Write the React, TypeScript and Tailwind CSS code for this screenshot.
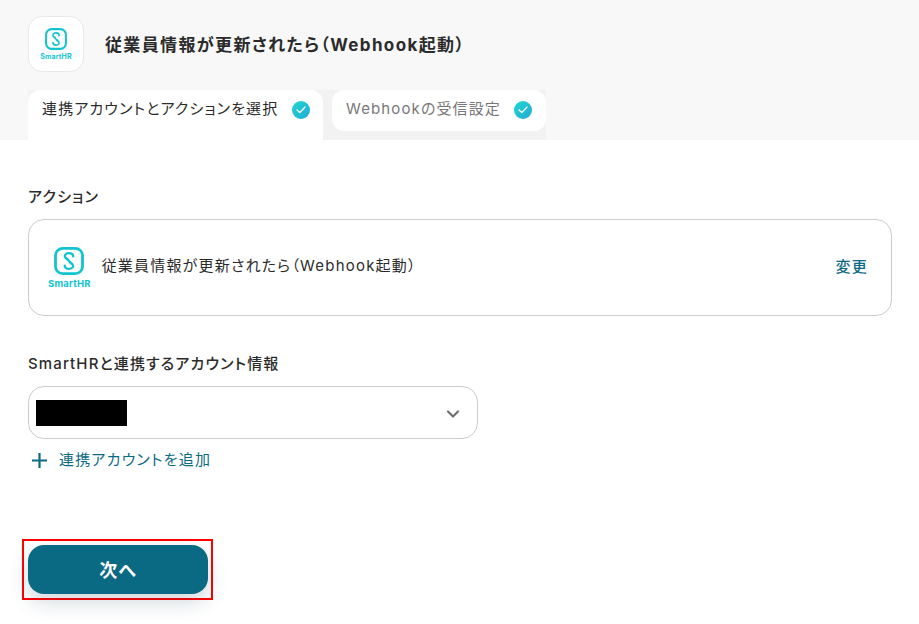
import React from "react";
import { ChevronDown } from "lucide-react";

function Logo({ box, h, text, mt }: { box: number; h: number; text: string; mt: string }) {
  return (
    <div className="flex flex-col items-center">
      <svg width={box} height={h} viewBox="0 0 30 30" preserveAspectRatio="none" fill="none">
        <rect x="1.5" y="1.5" width="27" height="27" rx="7.5" stroke="#12c4cf" strokeWidth="2.8" />
        <path
          d="M14.2 13.6 L11.6 11.4 C10 9.6 11.2 6.6 14.8 6.6 C17.4 6.6 19.2 8 19.2 10.2 M15.8 16.4 L18.4 18.6 C20 20.4 18.8 23.4 15.2 23.4 C12.6 23.4 10.8 22 10.8 19.8 M11.4 11.4 L18.6 18.6"
          stroke="#12c4cf"
          strokeWidth="2.3"
          strokeLinecap="round"
        />
      </svg>
      <span className={`${text} ${mt} font-bold leading-none tracking-[0.02em] text-[#12c4cf] whitespace-nowrap`}>SmartHR</span>
    </div>
  );
}

function Check() {
  return (
    <span className="flex h-[18px] w-[18px] shrink-0 items-center justify-center rounded-full bg-gradient-to-br from-[#1fd8d0] to-[#23a8d6]">
      <svg width="10" height="8" viewBox="0 0 10 8" fill="none">
        <path d="M1 4 L3.8 6.6 L9 1" stroke="#ffffff" strokeWidth="1.3" strokeLinecap="round" strokeLinejoin="round" />
      </svg>
    </span>
  );
}

export default function App() {
  return (
    <div className="h-[624px] w-[919px] overflow-hidden bg-white font-['Inter','Noto_Sans_CJK_JP',sans-serif] text-[#2b2b2b] [font-feature-settings:'palt']">
      <header className="h-[140px] bg-[#f8f8f8] pl-7 pt-4">
        <div className="flex h-14 items-center">
          <div className="flex h-14 w-14 items-center justify-center rounded-[14px] border border-[#e8e8e8] bg-white">
            <Logo box={22} h={22} text="text-[7px]" mt="mt-[3px]" />
          </div>
          <h1 className="ml-[21px] mt-[2px] text-[17px] font-bold leading-6 tracking-[0.08em]">従業員情報が更新されたら（Webhook起動）</h1>
        </div>
        <div className="mt-[18px] flex w-[518px] items-start bg-[#f2f2f2]">
          <div className="flex h-[50px] w-[295px] items-start justify-between rounded-t-xl bg-white pl-[14px] pr-[13px] pt-2">
            <span className="text-[15px] leading-[22px] tracking-[0.075em]">連携アカウントとアクションを選択</span>
            <span className="mt-[3px]"><Check /></span>
          </div>
          <div className="ml-[9px] flex h-[41px] w-[214px] items-start justify-between rounded-xl bg-white pl-[14px] pr-[14px] pt-2">
            <span className="text-[15px] leading-[22px] tracking-[0.075em] text-[#777777]">Webhookの受信設定</span>
            <span className="mt-[3px]"><Check /></span>
          </div>
        </div>
      </header>
      <main className="px-7 pt-[47px]">
        <p className="text-[15px] font-medium leading-5 tracking-[0.08em]">アクション</p>
        <div className="mt-3 flex h-[97px] w-[864px] items-center rounded-2xl border border-[#cccccc] pl-[19px] pr-[23px]">
          <div className="mt-[1px]"><Logo box={30} h={28} text="text-[9.5px]" mt="mt-[4px]" /></div>
          <span className="ml-[11px] mb-[3px] flex-1 text-[15px] leading-6 tracking-[0.08em]">従業員情報が更新されたら（Webhook起動）</span>
          <span className="mb-[2px] text-[15px] font-medium leading-6 tracking-[0.08em] text-[#0b6a83]">変更</span>
        </div>
        <p className="mt-[38px] text-[15px] font-medium leading-5 tracking-[0.075em]">SmartHRと連携するアカウント情報</p>
        <div className="mt-3 flex h-[53px] w-[450px] items-center justify-between rounded-2xl border border-[#cccccc] pl-[7px] pr-[14px]">
          <div className="h-[26px] w-[91px] bg-black" />
          <ChevronDown size={20} strokeWidth={2.6} className="mt-[2px] text-[#6f6f6f]" />
        </div>
        <div className="mt-[9px] flex h-6 items-center gap-[10px] pl-[2px] text-[#0b6a83]">
          <svg width="19" height="19" viewBox="0 0 19 19" fill="none">
            <path d="M9.5 2 V17 M2 9.5 H17" stroke="currentColor" strokeWidth="2.2" />
          </svg>
          <span className="text-[15px] leading-6 tracking-[0.08em]">連携アカウントを追加</span>
        </div>
        <div className="-ml-1.5 mt-[67px] w-[191px] border-2 border-[#ff0000] p-1">
          <button className="flex h-[49px] w-[180px] items-center justify-center rounded-2xl bg-[#0b6a83] pt-[1px] text-[18px] font-bold tracking-[0.05em] text-white shadow-[0_8px_20px_rgba(30,60,90,0.2)]">
            次へ
          </button>
        </div>
      </main>
    </div>
  );
}
